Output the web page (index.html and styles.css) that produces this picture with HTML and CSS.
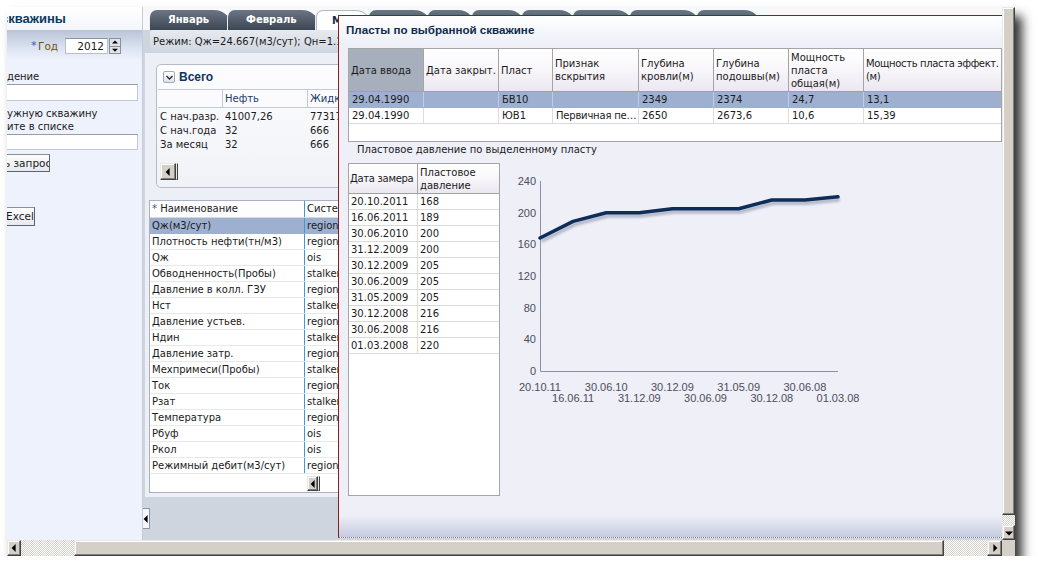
FILE: index.html
```html
<!DOCTYPE html>
<html lang="ru">
<head>
<meta charset="utf-8">
<title>Пласты по выбранной скважине</title>
<link rel="stylesheet" href="styles.css">
</head>
<body>
<div class="window">
  <aside class="lp">
    <div class="lp-head"><span class="lp-title">скважины</span></div>
    <div class="lp-year">
      <span class="req">*</span><span class="lbl-year">Год</span>
      <span class="num-input">2012</span>
      <span class="spin"><span class="spin-b"><i class="arr arr-u"></i></span><span class="spin-b"><i class="arr arr-d"></i></span></span>
    </div>
    <div class="lp-label l1">дение</div>
    <div class="lp-input"></div>
    <div class="lp-label l2">ужную скважину<br>ите в списке</div>
    <div class="lp-input i2"></div>
    <div class="btn b1"><span>ь запрос</span></div>
    <div class="btn b2"><span>Excel</span></div>
  </aside>

  <main class="main">
    <div class="tabs">
      <div class="tab w1">Январь</div>
      <div class="tab w2">Февраль</div>
      <div class="tab tab-sel w3">Март</div>
      <div class="tab w4"></div>
      <div class="tab w5"></div>
      <div class="tab w6"></div>
      <div class="tab w7"></div>
      <div class="tab w8"></div>
      <div class="tab w9"></div>
      <div class="tab w10"></div>
    </div>
    <div class="status">Режим: Qж=24.667(м3/сут); Qн=1.18(т/сут)</div>
    <div class="tab-body">
      <section class="box">
        <div class="box-head">
          <span class="chev"><svg width="9" height="9" viewBox="0 0 9 9"><polyline points="1.5,3 4.5,6 7.5,3" fill="none" stroke="#2b2b2b" stroke-width="1.4"/></svg></span>
          <span class="box-title">Всего</span>
        </div>
        <div class="sum">
          <div class="sum-row sum-hd"><span></span><span>Нефть</span><span>Жидкость</span></div>
          <div class="sum-row"><span>С нач.разр.</span><span>41007,26</span><span>77317</span></div>
          <div class="sum-row"><span>С нач.года</span><span>32</span><span>666</span></div>
          <div class="sum-row"><span>За месяц</span><span>32</span><span>666</span></div>
        </div>
        <div class="mini-sb"><span class="sb-btn mb"><i class="arr arr-l"></i></span><span class="sb-thumb mt"></span></div>
      </section>

      <section class="list">
        <div class="lrow lhd"><span><b class="star">*</b> Наименование</span><span>Система</span></div>
        <div class="lrow sel"><span>Qж(м3/сут)</span><span>region</span></div>
        <div class="lrow"><span>Плотность нефти(тн/м3)</span><span>region</span></div>
        <div class="lrow"><span>Qж</span><span>ois</span></div>
        <div class="lrow"><span>Обводненность(Пробы)</span><span>stalker</span></div>
        <div class="lrow"><span>Давление в колл. ГЗУ</span><span>region</span></div>
        <div class="lrow"><span>Нст</span><span>stalker</span></div>
        <div class="lrow"><span>Давление устьев.</span><span>region</span></div>
        <div class="lrow"><span>Ндин</span><span>stalker</span></div>
        <div class="lrow"><span>Давление затр.</span><span>region</span></div>
        <div class="lrow"><span>Мехпримеси(Пробы)</span><span>stalker</span></div>
        <div class="lrow"><span>Ток</span><span>region</span></div>
        <div class="lrow"><span>Рзат</span><span>stalker</span></div>
        <div class="lrow"><span>Температура</span><span>region</span></div>
        <div class="lrow"><span>Рбуф</span><span>ois</span></div>
        <div class="lrow"><span>Ркол</span><span>ois</span></div>
        <div class="lrow"><span>Режимный дебит(м3/сут)</span><span>region</span></div>
        <div class="mini-sb lsb"><span class="sb-btn lb"><i class="arr arr-l"></i></span><span class="sb-thumb mt"></span></div>
      </section>
    </div>
    <div class="collapse"><i class="arr arr-l"></i></div>
  </main>

  <div class="vscroll">
    <span class="sb-thumb vt"></span>
    <span class="sb-check vc"></span>
    <span class="sb-btn vb"><i class="arr arr-d"></i></span>
  </div>

  <div class="hscroll">
    <span class="sb-btn hb"><i class="arr arr-l"></i></span>
    <span class="sb-check hc1"></span>
    <span class="sb-thumb ht"></span>
    <span class="sb-check hc2"></span>
    <span class="sb-btn hb2"><i class="arr arr-r"></i></span>
    <span class="corner"></span>
  </div>

  <div class="dialog">
    <div class="dlg-head">Пласты по выбранной скважине</div>
    <div class="t1">
      <div class="t1-row t1-hd">
        <span class="hsel">Дата ввода</span>
        <span>Дата закрыт.</span>
        <span>Пласт</span>
        <span>Признак<br>вскрытия</span>
        <span>Глубина<br>кровли(м)</span>
        <span>Глубина<br>подошвы(м)</span>
        <span>Мощность<br>пласта<br>общая(м)</span>
        <span class="tight">Мощность пласта эффект.<br>(м)</span>
      </div>
      <div class="t1-row rsel">
        <span>29.04.1990</span><span></span><span>БВ10</span><span></span><span>2349</span><span>2374</span><span>24,7</span><span>13,1</span>
      </div>
      <div class="t1-row">
        <span>29.04.1990</span><span></span><span>ЮВ1</span><span class="ell">Первичная перфорация</span><span>2650</span><span>2673,6</span><span>10,6</span><span>15,39</span>
      </div>
    </div>
    <div class="caption">Пластовое давление по выделенному пласту</div>
    <div class="lower">
      <div class="t2">
        <div class="t2-row t2-hd"><span class="tight2">Дата замера</span><span>Пластовое<br>давление</span></div>
        <div class="t2-row"><span>20.10.2011</span><span>168</span></div>
        <div class="t2-row"><span>16.06.2011</span><span>189</span></div>
        <div class="t2-row"><span>30.06.2010</span><span>200</span></div>
        <div class="t2-row"><span>31.12.2009</span><span>200</span></div>
        <div class="t2-row"><span>30.12.2009</span><span>205</span></div>
        <div class="t2-row"><span>30.06.2009</span><span>205</span></div>
        <div class="t2-row"><span>31.05.2009</span><span>205</span></div>
        <div class="t2-row"><span>30.12.2008</span><span>216</span></div>
        <div class="t2-row"><span>30.06.2008</span><span>216</span></div>
        <div class="t2-row"><span>01.03.2008</span><span>220</span></div>
      </div>
      <svg class="chart" width="380" height="250" viewBox="0 0 380 250">
        <defs>
          <filter id="sh" x="-5%" y="-30%" width="110%" height="170%"><feGaussianBlur stdDeviation="1.2"/></filter>
        </defs>
        <text x="36" y="22" text-anchor="end">240</text>
        <text x="36" y="53.7" text-anchor="end">200</text>
        <text x="36" y="85.3" text-anchor="end">160</text>
        <text x="36" y="117" text-anchor="end">120</text>
        <text x="36" y="148.7" text-anchor="end">80</text>
        <text x="36" y="180.3" text-anchor="end">40</text>
        <text x="36" y="212" text-anchor="end">0</text>
        <path class="axis" d="M40.5 18 V208.5 H338"/>
        <polyline class="shadow" filter="url(#sh)" transform="translate(1.5,3)" points="40,75 73.1,58.4 106.2,49.7 139.3,49.7 172.4,45.7 205.5,45.7 238.7,45.7 271.8,37 304.9,37 338,33.8"/>
        <polyline class="line" points="40,75 73.1,58.4 106.2,49.7 139.3,49.7 172.4,45.7 205.5,45.7 238.7,45.7 271.8,37 304.9,37 338,33.8"/>
        <text x="40" y="227.7" text-anchor="middle">20.10.11</text>
        <text x="106.2" y="227.7" text-anchor="middle">30.06.10</text>
        <text x="172.4" y="227.7" text-anchor="middle">30.12.09</text>
        <text x="238.7" y="227.7" text-anchor="middle">31.05.09</text>
        <text x="304.9" y="227.7" text-anchor="middle">30.06.08</text>
        <text x="73.1" y="239.3" text-anchor="middle">16.06.11</text>
        <text x="139.3" y="239.3" text-anchor="middle">31.12.09</text>
        <text x="205.5" y="239.3" text-anchor="middle">30.06.09</text>
        <text x="271.8" y="239.3" text-anchor="middle">30.12.08</text>
        <text x="338" y="239.3" text-anchor="middle">01.03.08</text>
      </svg>
    </div>
  </div>
</div>
</body>
</html>
```

FILE: styles.css
```css
* { box-sizing: border-box; }
html, body { margin: 0; padding: 0; background: #ffffff; }
body {
  font-family: "DejaVu Sans", Verdana, sans-serif;
  font-size: 10px;
  color: #1b1b1b;
}

.window {
  position: relative;
  margin: 7px 0 0 7px;
  width: 1008px;
  height: 549px;
  display: grid;
  grid-template-columns: 136px 859px 13px;
  grid-template-rows: 533px 16px;
  background: #eef2fc;
  box-shadow: 7px 9px 10px rgba(0, 0, 0, 0.8);
}

/* ---------- left panel ---------- */
.lp {
  background: #eef2fc;
  border-right: 1px solid #c5cbd7;
  overflow: hidden;
  white-space: nowrap;
}
.lp-head { height: 23px; background: linear-gradient(#ffffff, #f4f6fb); }
.lp-title {
  display: block;
  margin-left: -6px;
  font: bold 13px/23px "Liberation Sans", Arial, sans-serif;
  color: #0c3a5e;
}
.lp-year {
  height: 30px;
  display: flex;
  align-items: flex-start;
  padding: 8px 0 0 24px;
  background: linear-gradient(#b9c4d7, #dce3f1 60%, #eef2fc);
}
.req { width: 7px; color: #2a5aa8; font-size: 11px; line-height: 16px; }
.lbl-year { width: 27px; color: #6f5412; font-size: 10.5px; line-height: 16px; }
.num-input {
  width: 43px; height: 16px;
  background: #fff;
  border: 1px solid #b9bec8;
  border-top-color: #8d939d;
  text-align: right;
  padding-right: 3px;
  font-size: 10.5px;
  line-height: 14px;
}
.spin { width: 12px; height: 16px; margin-left: 1px; display: flex; flex-direction: column; }
.spin-b {
  position: relative;
  flex: 1;
  background: #dfe3ea;
  border: 1px solid #8a909a;
}
.spin-b + .spin-b { border-top: none; }

.lp-label { line-height: 14px; color: #1b1b1b; }
.l1 { margin-top: 10px; }
.l2 { margin-top: 6px; line-height: 13px; }
.lp-input {
  width: 131px; height: 17px;
  background: #fff;
  border: 1px solid #c3c8d1;
  border-left: none;
  border-top-color: #979ca6;
}
.i2 { margin-top: 1px; height: 16px; }
.btn {
  height: 18px;
  background: linear-gradient(#fdfdfd, #e6e9ee);
  border: 1px solid #8a8f98;
  border-left: none;
  border-right-color: #5f646c;
  border-bottom-color: #5f646c;
  overflow: hidden;
  line-height: 16px;
  font-size: 10.5px;
}
.b1 { width: 43px; margin-top: 4px; }
.b1 span { display: block; margin-left: -3px; }
.b2 { width: 28px; margin-top: 35px; height: 19px; }
.b2 span { display: block; margin-left: -1px; }

/* ---------- main ---------- */
.main {
  background: #cfd5df;
  overflow: hidden;
  display: flex;
  flex-direction: column;
}
.tabs {
  flex: none;
  height: 23px;
  display: flex;
  padding: 3px 0 0 7px;
  background: #f7f8fa;
}
.tab {
  position: relative;
  flex: none;
  height: 20px;
  margin-right: -4px;
  padding-left: 18px;
  border-radius: 7px 18px 0 0;
  background: linear-gradient(#6b7585, #3b4553);
  box-shadow: -1px 0 0 #e9ecf1;
  color: #fff;
  font: bold 10px/20px "DejaVu Sans", Verdana, sans-serif;
  overflow: hidden;
  white-space: nowrap;
}
.tab-sel {
  z-index: 3;
  background: #ffffff;
  border: 1px solid #b3bac7;
  border-bottom: none;
  color: #0c2d50;
  padding-left: 15px;
  line-height: 19px;
}
.w1 { width: 82px; }
.w2 { width: 92px; }
.w3 { width: 57px; }
.w4 { width: 63px; }
.w5 { width: 48px; }
.w6 { width: 54px; }
.w7 { width: 55px; }
.w8 { width: 61px; }
.w9 { width: 71px; }
.w10 { width: 65px; }

.status {
  flex: none;
  width: 188px;
  height: 23px;
  margin-left: 7px;
  padding-left: 3px;
  border-radius: 4px 0 0 4px;
  background: linear-gradient(#e7eaf0, #cfd5df);
  line-height: 23px;
  white-space: nowrap;
  overflow: hidden;
}

.tab-body {
  flex: none;
  width: 193px;
  height: 444px;
  margin-left: 2px;
  padding: 11px 0 0 4px;
  background: #eceff6;
  overflow: hidden;
}
.box {
  width: 200px;
  height: 124px;
  margin-left: 7px;
  border: 1px solid #b4bccb;
  border-radius: 5px 0 0 5px;
  background: linear-gradient(#fdfdfe, #f0f2f7);
}
.box-head { height: 24px; display: flex; align-items: center; padding-left: 6px; }
.chev {
  display: flex;
  align-items: center;
  justify-content: center;
  width: 12px; height: 12px;
  border: 1px solid #a3abb8;
  border-radius: 2px;
  background: linear-gradient(#ffffff, #dde2ea);
}
.chev svg { display: block; }
.box-title {
  margin-left: 4px;
  font: bold 12px/1 "Liberation Sans", Arial, sans-serif;
  color: #0c3560;
}
.sum { margin-left: 1px; }
.sum-row { display: grid; grid-template-columns: 65px 85px 120px; height: 14px; line-height: 14px; }
.sum-row span { padding-left: 2px; white-space: nowrap; overflow: hidden; }
.sum-hd {
  height: 19px;
  line-height: 17px;
  margin-bottom: 2px;
  border-top: 1px solid #c4cad4;
  border-bottom: 1px solid #c4cad4;
  background: #fbfbfd;
  color: #1c3c6c;
}
.sum-hd span { border-right: 1px solid #c4cad4; }

.mini-sb { display: flex; height: 17px; margin: 11px 0 0 3px; }
.mb { width: 16px; }
.mt { flex: 1; }

.list {
  width: 200px;
  height: 293px;
  margin-top: 12px;
  border: 1px solid #a9b1c1;
  background: #ffffff;
}
.lrow {
  display: grid;
  grid-template-columns: 155px 100px;
  height: 16px;
  line-height: 15px;
  border-bottom: 1px solid #e7e8ec;
}
.lrow span { padding-left: 2px; white-space: nowrap; overflow: hidden; }
.lrow span:first-child { border-right: 1px solid #3b9ad8; }
.lhd { height: 17px; line-height: 16px; background: #fdfdfe; border-bottom: 1px solid #d5d9e1; }
.star { font-weight: normal; color: #2a5aa8; }
.sel { background: #9eb0d0; border-bottom-color: #9eb0d0; }
.lsb { height: 15px; margin: 2px 0 0 157px; }
.lb { width: 11px; }

.collapse {
  position: relative;
  flex: none;
  width: 7px;
  height: 21px;
  margin-top: 11px;
  background: #f4f6fa;
  border: 1px solid #8c94a4;
  border-left: none;
}

/* ---------- scrollbars ---------- */
.sb-btn, .sb-thumb {
  position: relative;
  display: block;
  flex: none;
  background: #d4d0c8;
  border: 1px solid;
  border-color: #ebe9e4 #404040 #404040 #ebe9e4;
  box-shadow: inset -1px -1px 0 #808080, inset 1px 1px 0 #ffffff;
}
.sb-check {
  display: block;
  flex: none;
  background-color: #d4d0c8;
  background-image: conic-gradient(#ffffff 0 25%, transparent 0 50%, #ffffff 0 75%, transparent 0);
  background-size: 2px 2px;
}
.arr { position: absolute; left: 50%; top: 50%; width: 0; height: 0; }
.arr-l { border-top: 4px solid transparent; border-bottom: 4px solid transparent; border-right: 4px solid #000; transform: translate(-60%, -50%); }
.arr-r { border-top: 4px solid transparent; border-bottom: 4px solid transparent; border-left: 4px solid #000; transform: translate(-40%, -50%); }
.arr-d { border-left: 4px solid transparent; border-right: 4px solid transparent; border-top: 4px solid #000; transform: translate(-50%, -40%); }
.arr-u { border-left: 3px solid transparent; border-right: 3px solid transparent; border-bottom: 3px solid #000; transform: translate(-50%, -50%); }
.spin-b .arr-d { border-left-width: 3px; border-right-width: 3px; border-top-width: 3px; }

.vscroll { display: flex; flex-direction: column; background: #d4d0c8; }
.vt { height: 508px; }
.vc { height: 10px; }
.vb { height: 15px; }

.hscroll { grid-column: 1 / 4; display: flex; background: #d4d0c8; }
.hb { width: 14px; }
.hc1 { width: 53px; }
.ht { width: 870px; }
.hc2 { width: 43px; }
.hb2 { width: 15px; }
.corner { width: 13px; background: #d4d0c8; }

/* ---------- dialog ---------- */
.dialog {
  position: absolute;
  z-index: 10;
  left: 331px;
  top: 8px;
  width: 664px;
  height: 523px;
  border-left: 1px solid #8b1d1d;
  border-top: 1px solid #8b1d1d;
  border-bottom: 1px dotted #7d7d7d;
  background: linear-gradient(#eeeff7 0, #eeeff7 calc(100% - 22px), #c5cce0 100%);
}
.dlg-head {
  height: 27px;
  padding-left: 7px;
  background: linear-gradient(#ffffff, #eef0f8);
  font: bold 11.6px/27px "Liberation Sans", Arial, sans-serif;
  color: #0f2b4c;
}
.t1 {
  width: 654px;
  height: 94px;
  margin: 5px 0 0 9px;
  border: 1px solid #a5a5a5;
  background: #ffffff;
}
.t1-row {
  display: grid;
  grid-template-columns: 75px 75px 54px 86px 75px 75px 75px 137px;
  height: 16px;
  line-height: 15px;
  border-bottom: 1px solid #dadada;
}
.t1-row span {
  padding-left: 3px;
  white-space: nowrap;
  overflow: hidden;
  border-right: 1px solid #dcdcdc;
}
.t1-row span:last-child { border-right: none; }
.t1-hd {
  height: 43px;
  line-height: 13px;
  border-bottom: 1px solid #a0a0a0;
  background: linear-gradient(#ffffff 0%, #f8f6fa 50%, #ece7f0 100%);
}
.t1-hd span {
  display: flex;
  align-items: center;
  padding-left: 2px;
  border-right: 1px solid #a4a4a4;
}
.t1-hd span:last-child { border-right: none; }
.t1-hd .hsel { background: #a7afbc; }
.t1-hd .tight { letter-spacing: -0.35px; }
.rsel { background: #9eb0d0; border-bottom-color: #9eb0d0; }
.rsel span { border-right-color: #c3cde0; }
.ell { text-overflow: ellipsis; padding-right: 1px; letter-spacing: -0.2px; }

.caption { margin-top: 1px; padding-left: 18px; line-height: 14px; }

.lower { display: flex; align-items: flex-start; margin: 6px 0 0 9px; }
.t2 {
  flex: none;
  width: 152px;
  height: 333px;
  border: 1px solid #a5a5a5;
  background: #ffffff;
}
.t2-row {
  display: grid;
  grid-template-columns: 69px 81px;
  height: 16px;
  line-height: 15px;
  border-bottom: 1px solid #dadada;
}
.t2-row span { padding-left: 2px; white-space: nowrap; overflow: hidden; border-right: 1px solid #dcdcdc; }
.t2-row span:last-child { border-right: none; }
.t2-hd {
  height: 30px;
  line-height: 13px;
  border-bottom: 1px solid #a0a0a0;
  background: linear-gradient(#ffffff 0%, #f8f6fa 50%, #ece7f0 100%);
}
.t2-hd span { display: flex; align-items: center; border-right-color: #a4a4a4; }
.t2-hd .tight2 { letter-spacing: -0.3px; padding-left: 1px; }

.chart { flex: none; display: block; }
.chart text { font: 11px "Liberation Sans", Arial, sans-serif; fill: #4d4d5c; }
.chart .axis { fill: none; stroke: #8e8ea8; stroke-width: 1; }
.chart .line { fill: none; stroke: #0e2d58; stroke-width: 3.5; stroke-linejoin: round; stroke-linecap: round; }
.chart .shadow { fill: none; stroke: #7d86a0; stroke-opacity: 0.5; stroke-width: 4; }
```
